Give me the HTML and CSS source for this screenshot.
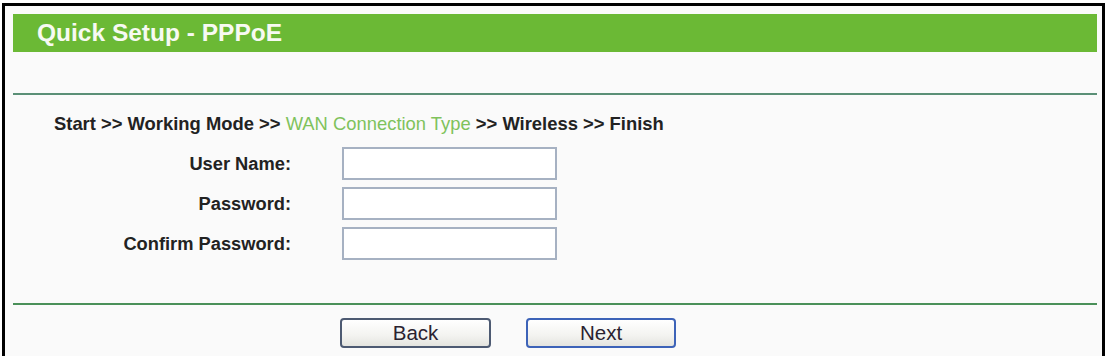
FILE: index.html
```html
<!DOCTYPE html>
<html>
<head>
<meta charset="utf-8">
<title>Quick Setup - PPPoE</title>
<link rel="stylesheet" href="styles.css">
</head>
<body>
<div class="frame">
  <div class="header">Quick Setup - PPPoE</div>
  <div class="rule rule-top"></div>
  <div class="crumbs">Start &gt;&gt; Working Mode &gt;&gt; <span class="current">WAN Connection Type</span> &gt;&gt; Wireless &gt;&gt; Finish</div>
  <div class="form">
    <label class="label" for="user">User Name:</label>
    <input class="field" id="user" type="text">
    <label class="label" for="pass">Password:</label>
    <input class="field" id="pass" type="password">
    <label class="label" for="conf">Confirm Password:</label>
    <input class="field" id="conf" type="password">
  </div>
  <div class="rule rule-bottom"></div>
  <div class="buttons">
    <button class="btn btn-back" type="button">Back</button>
    <button class="btn btn-next" type="button">Next</button>
  </div>
</div>
</body>
</html>
```

FILE: styles.css
```css
html, body {
  margin: 0;
  padding: 0;
  background: #ffffff;
}

body {
  font-family: "Liberation Sans", Arial, sans-serif;
  color: #1e1e1e;
}

.frame {
  box-sizing: border-box;
  margin: 3px 0 0 2px;
  width: 1103px;
  height: 353px;
  border: 3px solid #000000;
  border-bottom: 0;
  background: #fafafa;
  padding: 8px 5px 0 8px;
  overflow: hidden;
}

.header {
  height: 38px;
  line-height: 38px;
  background: #6bb935;
  color: #f7faf2;
  font-weight: bold;
  font-size: 24.5px;
  padding-left: 24px;
}

.rule {
  height: 2px;
}

.rule-top {
  margin-top: 41px;
  background: #5a8f76;
}

.crumbs {
  margin-top: 18px;
  padding-left: 41px;
  font-size: 18.4px;
  line-height: 22px;
  font-weight: bold;
  color: #222222;
  white-space: nowrap;
}

.crumbs .current {
  font-weight: normal;
  color: #7fc25c;
}

.form {
  margin-top: 12px;
  display: grid;
  grid-template-columns: 278px 215px;
  column-gap: 51px;
  row-gap: 7px;
  align-items: center;
}

.label {
  text-align: right;
  font-weight: bold;
  font-size: 18.3px;
  color: #222222;
}

.field {
  box-sizing: border-box;
  width: 215px;
  height: 33px;
  margin: 0;
  border: 2px solid #a6b1c2;
  background: #ffffff;
  padding: 2px 4px;
  font-size: 16px;
}

.rule-bottom {
  margin-top: 43px;
  background: #4a9059;
}

.buttons {
  margin-top: 13px;
  padding-left: 327px;
  display: flex;
  gap: 35px;
}

.btn {
  box-sizing: border-box;
  height: 30px;
  margin: 0;
  padding: 0;
  border: 2px solid #4d5a72;
  border-radius: 4px;
  background: linear-gradient(#ffffff, #f3f3f0 60%, #e4e4df);
  font-family: "Liberation Sans", Arial, sans-serif;
  font-size: 20.5px;
  color: #2a2230;
}

.btn-back {
  width: 151px;
}

.btn-next {
  width: 150px;
  border-color: #3d63b8;
}
```
